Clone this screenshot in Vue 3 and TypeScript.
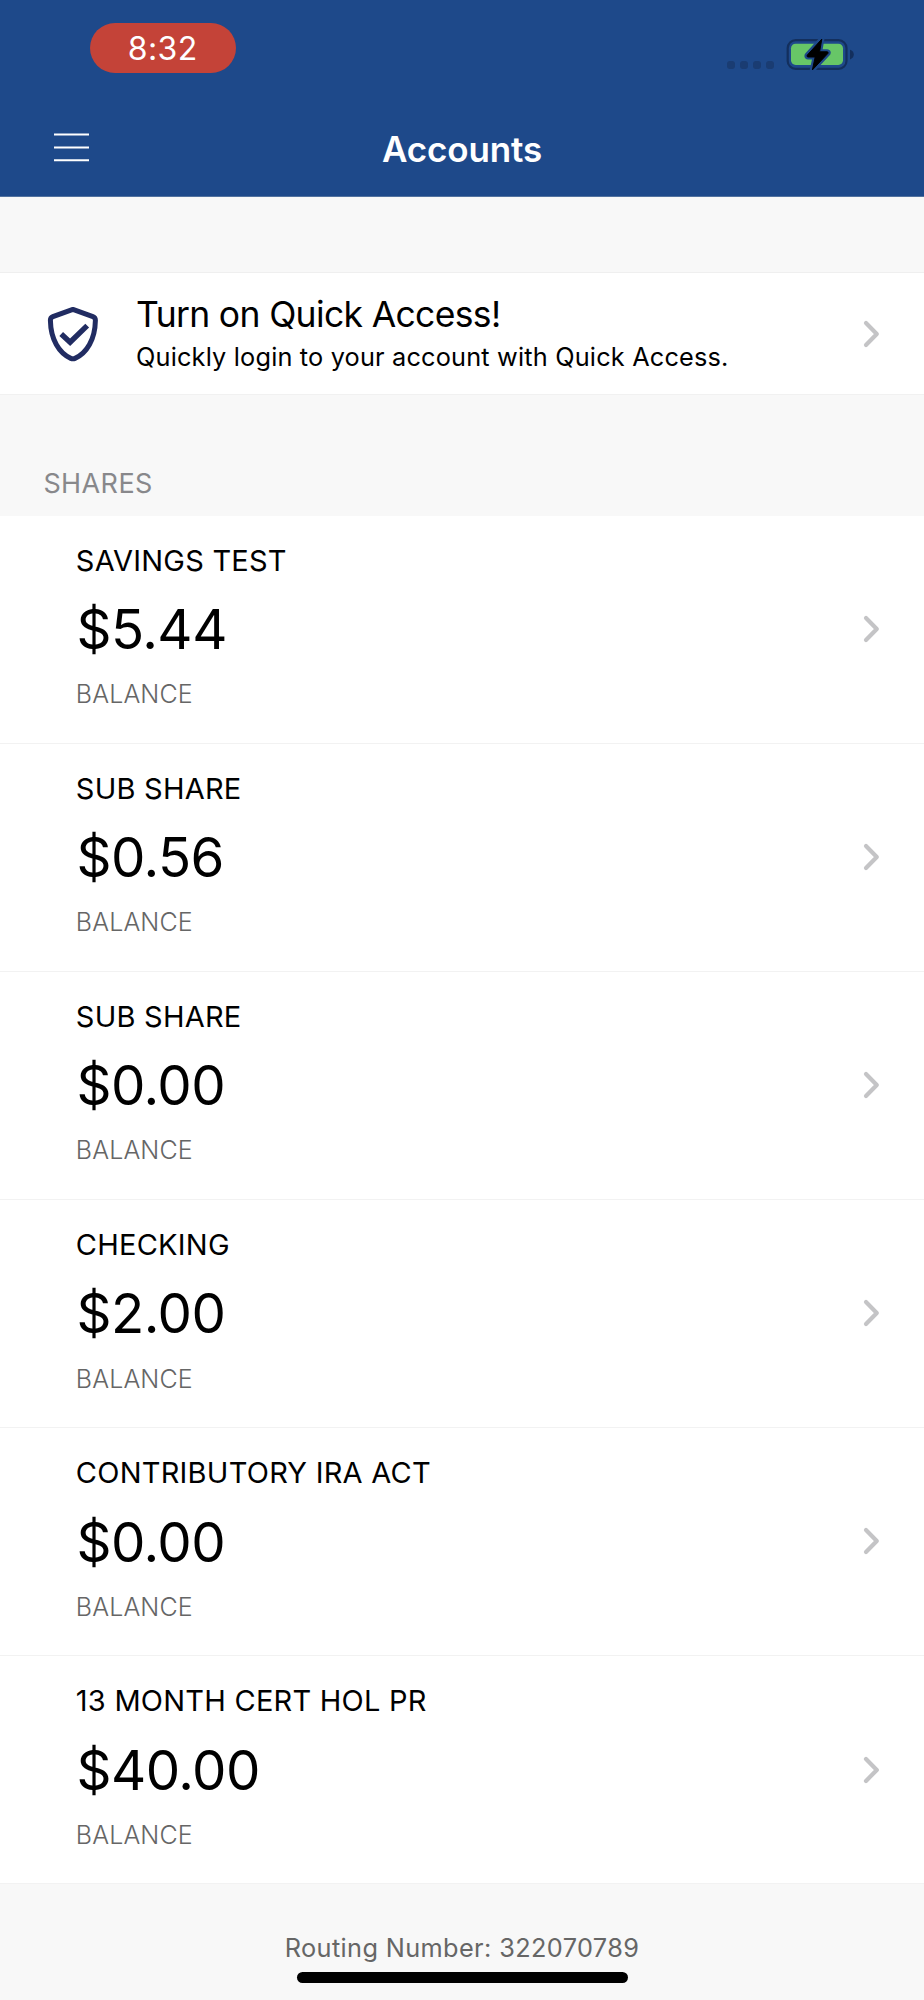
<script setup lang="ts">
interface Account {
  name: string
  balance: string
}

const accounts: Account[] = [
  { name: 'SAVINGS TEST', balance: '$5.44' },
  { name: 'SUB SHARE', balance: '$0.56' },
  { name: 'SUB SHARE', balance: '$0.00' },
  { name: 'CHECKING', balance: '$2.00' },
  { name: 'CONTRIBUTORY IRA ACT', balance: '$0.00' },
  { name: '13 MONTH CERT HOL PR', balance: '$40.00' },
]
const routingNumber = '322070789'
const signalDots = 4
</script>

<template>
  <div class="screen">
    <header class="header">
      <div class="status-bar">
        <span class="time-pill">8:32</span>
        <div class="status-icons">
          <div class="signal">
            <i v-for="n in signalDots" :key="n"></i>
          </div>
          <svg class="battery" width="70" height="36" viewBox="785 36 70 36">
            <rect x="787.7" y="40.1" width="58.8" height="28.8" rx="8" fill="none" stroke="#132f5d" stroke-width="2.2" />
            <path d="M850 49.8c2.4.8 3.8 2.5 3.8 4.8s-1.4 4-3.8 4.8z" fill="#132f5d" />
            <rect x="791" y="43.7" width="52" height="21.2" rx="4.6" fill="#67c667" />
            <path
              d="M821.8 39.1 807.2 55.2Q806.6 56.9 808 57H815.2L812.4 69.9 828 53.3Q828.6 51.9 827 51.8H819.6Z"
              fill="#1e498a" stroke="#1e498a" stroke-width="5.2" stroke-linejoin="round"
            />
            <path
              d="M821.8 39.1 807.2 55.2Q806.6 56.9 808 57H815.2L812.4 69.9 828 53.3Q828.6 51.9 827 51.8H819.6Z"
              fill="#000" stroke="#000" stroke-width="1" stroke-linejoin="round"
            />
          </svg>
        </div>
      </div>
      <nav class="nav">
        <button class="menu" aria-label="Menu">
          <svg width="36" height="32" viewBox="0 0 36 32">
            <path d="M0 3.5h35M0 16.4h35M0 29.3h35" stroke="#fff" stroke-width="2" />
          </svg>
        </button>
        <h1>Accounts</h1>
      </nav>
    </header>

    <section class="quick">
      <svg class="shield" width="52" height="56" viewBox="0 0 52 56">
        <path
          d="M25.9 3.4 45.9 10.6Q48.5 11.6 48.4 14.4C48.1 33.4 39.8 47.2 28 52.4Q25.9 53.3 23.8 52.4C12 47.2 3.7 33.4 3.4 14.4Q3.3 11.6 5.9 10.6Z"
          fill="none" stroke="#212c62" stroke-width="5" stroke-linejoin="round"
        />
        <path d="M14.2 28 23.1 36.2 40.2 19.6" fill="none" stroke="#212c62" stroke-width="5.4" />
      </svg>
      <div class="quick-text">
        <h2>Turn on Quick Access!</h2>
        <p>Quickly login to your account with Quick Access.</p>
      </div>
      <svg class="chevron" width="18" height="28" viewBox="0 0 18 28">
        <path d="M3 3.1 13.8 14 3 24.9" />
      </svg>
    </section>

    <h3 class="group-title">SHARES</h3>

    <ul class="accounts">
      <li v-for="(account, i) in accounts" :key="i" class="account">
        <div>
          <div class="name">{{ account.name }}</div>
          <div class="amount">{{ account.balance }}</div>
          <div class="label">BALANCE</div>
        </div>
        <svg class="chevron" width="18" height="28" viewBox="0 0 18 28">
          <path d="M3 3.1 13.8 14 3 24.9" />
        </svg>
      </li>
    </ul>

    <footer class="footer">
      <p>Routing Number: {{ routingNumber }}</p>
      <div class="home-indicator"></div>
    </footer>
  </div>
</template>

<style>
body {
  margin: 0;
  background: #f8f8f8;
}
</style>

<style scoped>
.screen {
  box-sizing: border-box;
  width: 924px;
  height: 2000px;
  overflow: hidden;
  background: #f8f8f8;
  color: #000;
  font-family: Inter, "Liberation Sans", sans-serif;
}
h1, h2, h3, p, ul {
  margin: 0;
  padding: 0;
  font-weight: 400;
}
.header {
  box-sizing: border-box;
  height: 197px;
  background: #1e498a;
  border-bottom: 1px solid #52729f;
  color: #fff;
}
.status-bar {
  display: flex;
  justify-content: space-between;
  align-items: flex-start;
  height: 100px;
  padding: 23px 69px 0 89.5px;
  box-sizing: border-box;
}
.time-pill {
  width: 146.5px;
  height: 50px;
  border-radius: 25px;
  background: #c44338;
  font-size: 32px;
  font-weight: 400;
  line-height: 51px;
  letter-spacing: 0.4px;
  text-align: center;
}
.status-icons {
  display: flex;
  align-items: flex-start;
  padding-top: 13px;
}
.signal {
  display: flex;
  gap: 5px;
  margin: 25px 11px 0 0;
}
.signal i {
  width: 8px;
  height: 8px;
  border-radius: 3px;
  background: #1a3c72;
}
.nav {
  display: grid;
  grid-template-columns: 100px 1fr 100px;
  align-items: center;
  height: 94px;
}
.menu {
  margin: 0;
  padding: 0 0 0 54px;
  border: 0;
  background: none;
  line-height: 0;
  text-align: left;
}
h1 {
  font-size: 35px;
  font-weight: 600;
  line-height: 44px;
  letter-spacing: -0.13px;
  text-align: center;
  padding-top: 3px;
}
.quick {
  display: flex;
  align-items: center;
  box-sizing: border-box;
  height: 123px;
  margin-top: 75px;
  padding: 0 43px 0 47px;
  border-top: 1px solid #efefef;
  border-bottom: 1px solid #f1f1f1;
  background: #fff;
}
.quick-text {
  flex: 1;
  margin-left: 37px;
}
h2 {
  font-size: 35.5px;
  line-height: 44px;
  letter-spacing: -0.66px;
}
.quick-text p {
  margin-top: 2px;
  font-size: 25.3px;
  line-height: 36px;
  letter-spacing: 0.18px;
}
.chevron path {
  fill: none;
  stroke: #c4c4c6;
  stroke-width: 4.2;
  stroke-linecap: round;
  stroke-linejoin: round;
}
.group-title {
  box-sizing: border-box;
  height: 120.5px;
  padding: 72px 0 0 43.4px;
  color: #88888b;
  font-size: 27px;
  line-height: 34px;
  letter-spacing: 0.4px;
}
.accounts {
  list-style: none;
  background: #fff;
}
.account {
  display: flex;
  justify-content: space-between;
  align-items: center;
  box-sizing: border-box;
  height: 228.1px;
  padding: 0 43px 0 75.8px;
  border-bottom: 1px solid #f2f2f2;
}
.name {
  font-size: 29px;
  line-height: 36px;
  letter-spacing: 0.24px;
}
.amount {
  margin: 18.4px 0 18.1px 0.6px;
  font-size: 54.6px;
  line-height: 64px;
  letter-spacing: -0.5px;
}
.label {
  padding-bottom: 6px;
  color: #666;
  font-size: 25px;
  font-weight: 300;
  line-height: 30px;
  letter-spacing: 0.14px;
}
.footer {
  display: flex;
  flex-direction: column;
  align-items: center;
  padding-top: 49px;
}
.footer p {
  color: #666;
  font-size: 25.3px;
  line-height: 30px;
  letter-spacing: 0.38px;
}
.home-indicator {
  width: 331px;
  height: 11px;
  margin-top: 8.5px;
  border-radius: 6px;
  background: #000;
}
</style>
